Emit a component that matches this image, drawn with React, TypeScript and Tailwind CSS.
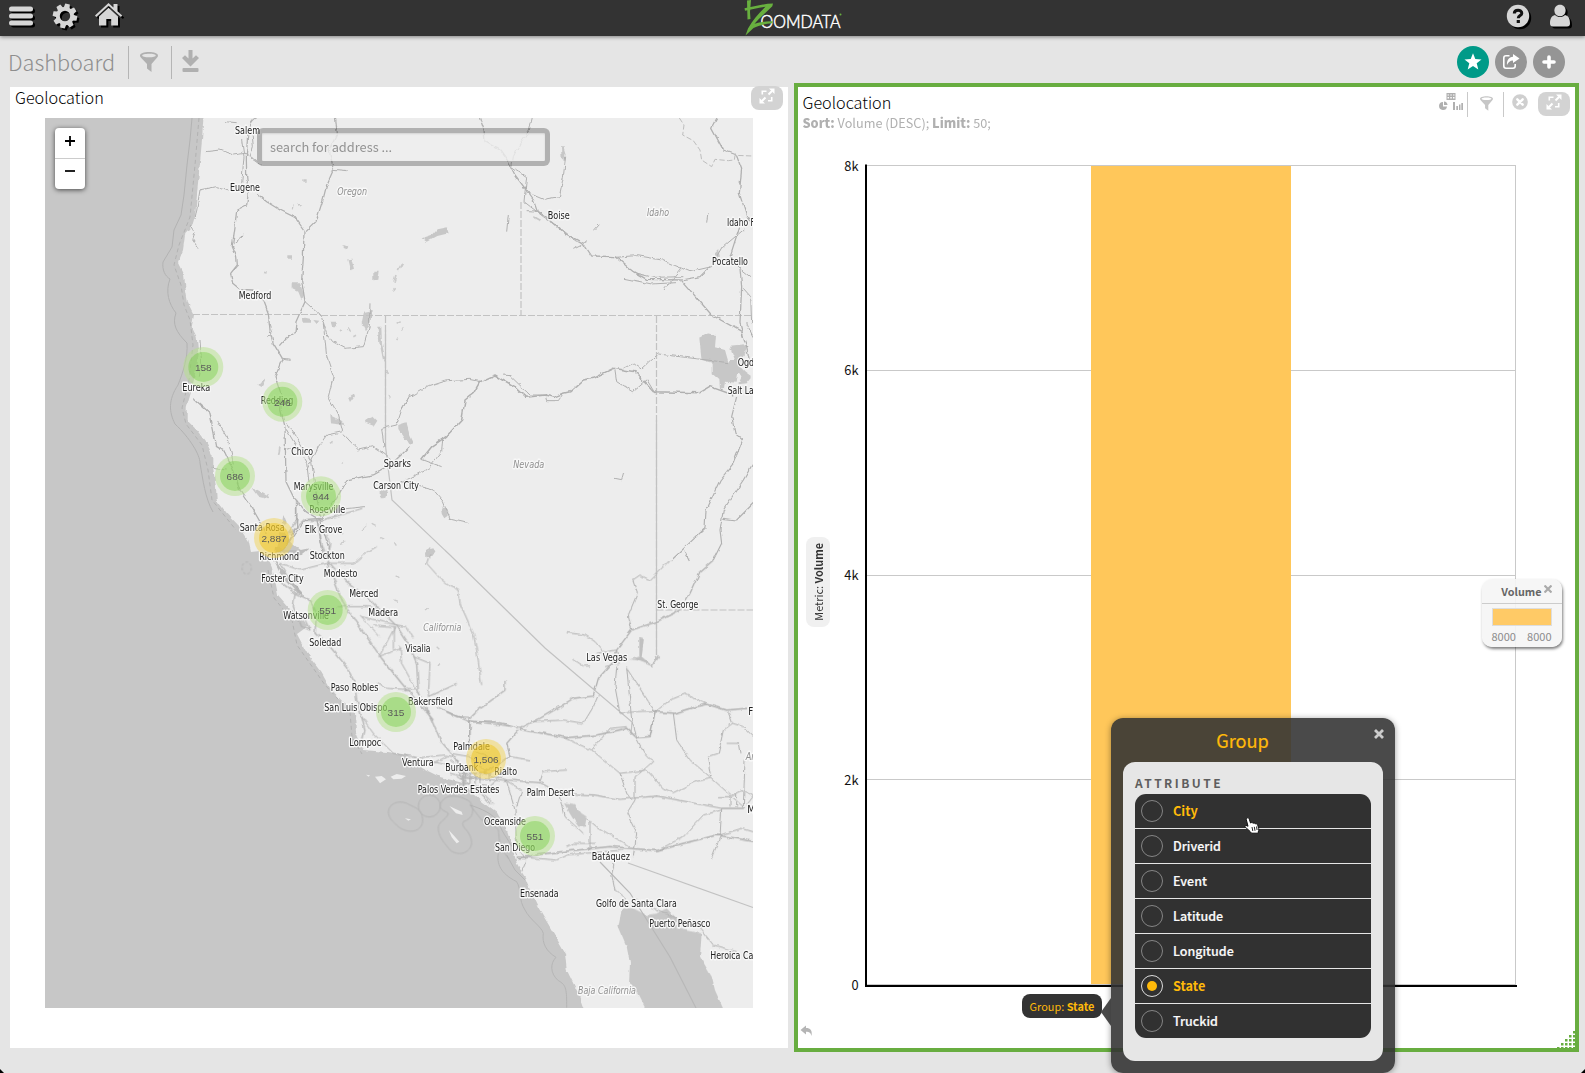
import React from "react";

const FONT = "font-['Noto_Sans_CJK_SC','Noto_Sans',sans-serif]";

type Label = [string, number, number, number, boolean?];

const LABELS: Label[] = [
  ["Salem", 235, 134, 25],
  ["Eugene", 230, 190.7, 30],
  ["Oregon", 337.3, 195, 29.7, true],
  ["Medford", 238.7, 298.5, 32.7],
  ["Eureka", 182.3, 391.2, 28],
  ["Redding", 260.7, 404.2, 32.7],
  ["Chico", 291.3, 455.2, 21.7],
  ["Sparks", 383.7, 467, 27.3],
  ["Carson City", 373.3, 488.5, 45.7],
  ["Marysville", 293.7, 489.5, 39.7],
  ["Roseville", 309.3, 512.5, 36],
  ["Santa Rosa", 239.7, 531, 45],
  ["Elk Grove", 304.7, 533, 37.7],
  ["Richmond", 259.3, 560, 39.7],
  ["Stockton", 309.7, 559, 35],
  ["Foster City", 261.3, 582, 42.3],
  ["Modesto", 323.7, 577.2, 33.7],
  ["Merced", 349.3, 596.5, 29],
  ["Watsonville", 283.3, 619, 45.7],
  ["Madera", 368.3, 616, 29.7],
  ["California", 423.3, 630.5, 38, true],
  ["Soledad", 309.3, 646.2, 32],
  ["Visalia", 405.3, 652, 25.3],
  ["Paso Robles", 330.7, 691.2, 47.7],
  ["San Luis Obispo", 324.3, 710.5, 63],
  ["Bakersfield", 408, 705.2, 45],
  ["Lompoc", 349.3, 746.2, 32],
  ["Ventura", 402, 766, 31.7],
  ["Palmdale", 453.3, 749.5, 36.7],
  ["Burbank", 445.3, 771.2, 33],
  ["Rialto", 494.3, 775.2, 22.7],
  ["Palos Verdes Estates", 417.7, 793.2, 81.7],
  ["Oceanside", 484, 825.2, 42],
  ["Palm Desert", 526.7, 796.2, 47.7],
  ["San Diego", 495, 851.2, 40],
  ["Batáquez", 591.7, 860, 38.3],
  ["Ensenada", 520, 897.2, 38.7],
  ["Golfo de Santa Clara", 596, 906.5, 80.7],
  ["Puerto Peñasco", 649.3, 927, 61],
  ["Heroica Ca", 710.3, 959, 43],
  ["Baja California", 578, 994.2, 58, true],
  ["Las Vegas", 586.3, 661, 41],
  ["St. George", 657.3, 608, 41],
  ["F", 748.3, 715, 5],
  ["M", 747.3, 813.2, 8],
  ["Ar", 745.7, 759.7, 9, true],
  ["Boise", 547.7, 218.5, 22],
  ["Idaho", 647, 216.2, 22, true],
  ["Idaho F", 727, 226, 28],
  ["Pocatello", 712, 265, 36],
  ["Nevada", 513.3, 467.7, 31, true],
  ["Ogd", 737.7, 366.2, 16.5],
  ["Salt La", 727.7, 393.5, 26],
];

const MARKERS: [string, number, number, boolean?][] = [
  ["158", 203.3, 367],
  ["246", 282.3, 401.7],
  ["686", 235, 476],
  ["944", 321, 496.3],
  ["2,887", 274, 538, true],
  ["551", 327.7, 610],
  ["315", 396, 712],
  ["1,506", 486, 759, true],
  ["551", 535, 836],
];

const OCEAN =
  "M35 108H204L202 140 199.3 170 197.3 190 195 217 192.7 225 185.3 233 183 250 178 263 184 275 185.3 287 188 303 194 315 191.7 327 196.7 337 198 350 196 370 191.7 390 186.7 407 186.7 420 196.7 430 206.7 443 213.3 457 213.3 470 216 487 216.7 500 226.7 513 240 527 248.3 540 251 552 260 551 267 557 271.7 567 275 580 278 595 286.7 605 295 615 303 621 308 626 297 634 301.7 643 311.7 660 321.7 673 330 688 343 702 355 713 356 733 363 750 386.7 752 406.7 755 420 767 440 777 463 783 473 793 483 802 496.7 812 506.7 830 513 850 516.7 863 521.7 872 525 877 530 890 538 907 550 927 565 953 566.7 970 578 993 587 1018H35Z";

const OFFSHORE =
  "M192 118 190 140 187 165 184 195 181 215 174 230 172 247 163 262C162 270 165 276 170 279 165 292 169 304 176 313 172 324 176 332 187 343 188 358 183 372 178 385 168 400 169 412 175 424 190 438 200 455 200 463 203 480 205 498 213 512 226 525 238 535C247 545 245 548 240 551 230 558 232 577 243 580 250 583 256 581 259 577 263 585 264 596 274 608L284 616C284 630 288 642 297 658L308 673 317 688 330 703 340 714C348 722 344 738 347 752L357 758C348 768 350 783 366 788 376 797 390 795 404 792L428 785 448 788 473 791";

/** A drawing group whose local units are a third of a map pixel. */
function Tile({ x, y, children }: { x: number; y: number; children: React.ReactNode }) {
  return <g transform={`translate(${x} ${y}) scale(.33333)`}>{children}</g>;
}

function GeoMap() {
  return (
    <svg viewBox="45 118 708 890" className="block h-[890px] w-[708px] overflow-hidden">
      <defs>
        <filter id="rough" x="35" y="108" width="728" height="910" filterUnits="userSpaceOnUse" colorInterpolationFilters="sRGB">
          <feTurbulence type="fractalNoise" baseFrequency="0.12" numOctaves="3" seed="4" />
          <feDisplacementMap in="SourceGraphic" scale="4" xChannelSelector="R" yChannelSelector="G" />
        </filter>
      </defs>
      <rect x="45" y="118" width="708" height="890" fill="#ededed" />

      <g filter="url(#rough)">
        <path d={OCEAN} fill="#c7c7c7" />
        <Tile x={450} y={560}>
          <path
            d="M515 1045 505 1100 530 1160 540 1210 537 1270 565 1300 600 1370H830L795 1290 785 1250 750 1190 755 1120 680 1105 680 1075 650 1045 620 1060 590 1065 550 1045Z"
            fill="#c7c7c7"
          />
          <path d="M342 730 375 735 395 760 410 770 405 800 385 800 365 770Z" fill="#c7c7c7" />
          <path d="M568 232 582 235 575 290 605 315 622 285 628 292 608 320 585 310 560 300 540 298 568 290Z" fill="#c0c0c0" />
        </Tile>
        <Tile x={400} y={110}>
          <path
            d="M898 685 925 670 948 675 945 712 975 720 985 755 1005 750 990 710 1040 705 1035 730 1015 765 1035 785 1056 800 1040 820 1015 823 1025 800 1015 785 1010 818 975 815 972 838 960 838 958 810 935 790 935 758 905 750Z"
            fill="#c7c7c7"
          />
          <path d="M65 385 95 375 110 358 140 352 146 370 112 378 80 395ZM483 112h8l6 20-4 18-8-8ZM0 945 20 940 28 975 38 995 28 1003 10 970 0 968ZM128 1190l12 2 4 20-10 8-10-14ZM75 1325l15-10 16 8-8 14-22 2ZM945 430l12-12 6 22-18 2ZM400 318l22 12-4 4-18-10Z" fill="#c7c7c7" />
        </Tile>
        <Tile x={40} y={110}>
          <path d="M755 520 780 520 792 555 785 570 775 545 755 535ZM972 605 995 600 992 640 975 660 965 640ZM1000 482h16l-4 30-12 2ZM925 448l12-2 8 30-12 5ZM908 405l14 5-4 8-10-4ZM742 436h14v10h-14ZM868 915 905 932 915 945 870 940ZM975 930l25-10 12 12-10 16-25-10ZM1075 945l25-8 10 60-15-10-20-30ZM1012 650h12l2 50 10 50-6 5-12-60ZM1022 1140h22l-10 25h-12ZM635 1130l45 25 5 10-30-8ZM790 208h10v10h-10ZM872 635h18v14h-14ZM788 622l22 4v12h-20ZM820 630l18 2-8 10ZM1045 850l4 14 4-2ZM925 865l15-15 5 6-15 20ZM655 825l18-20 2 6-10 20ZM755 295l10-10-4 14ZM775 282h12l-8 6Z" fill="#c9c9c9" />
          <path d="M1062 515l6-20M1075 480l12-22M1058 545l8-10M1070 640l12-8M1085 665l8-14M1070 690l6-8M900 660l6 4M925 655l6 8M940 680l8-4M672 487l8 2M1040 780l5 12M870 1000l8-6M720 1010l-4 25M905 1060l6-6M680 1150l6 14" stroke="#cbcbcb" strokeWidth="5" fill="none" />
          <path d="M730 1215 740 1240 725 1255 735 1275 755 1300 790 1325 760 1330 720 1345 700 1350 715 1300Z" fill="#c7c7c7" />
        </Tile>
        <Tile x={180} y={500}>
          <path d="M285 140 310 150 365 150 390 145 365 165 310 170 290 185 305 210 350 260 375 285 350 280 300 220 280 180Z" fill="#bdbdbd" />
          <path d="M740 150 760 145 766 155 748 166ZM787 25l12 2 4 20-10 8-8-14Z" fill="#c7c7c7" />
          <path d="M575 70l12 6M600 110l10 4M640 130l6 10M470 95l20 10M480 130l18-6M560 75l-14 14M650 230l8 6M735 330l8-6M640 300l12 4M770 440l8 8M780 490l-6 8" stroke="#cbcbcb" strokeWidth="4" fill="none" />
        </Tile>
      </g>

      {/* channel islands */}
      <Tile x={180} y={500}>
        <path
          d="M585 830 605 828 618 838 600 850ZM632 830 650 822 678 828 665 836 640 838ZM558 824l12 2-4 4ZM808 918 822 925 845 935 848 945 828 940ZM806 990 820 1005 838 1025 830 1030 815 1012ZM675 955l18 3-8 4Z"
          fill="#ededed"
        />
      </Tile>

      {/* coastal waters */}
      <g fill="none" stroke="#b2b2b2" strokeWidth="1">
        <path d={OFFSHORE} />
        <path d="M199 118 195 165 190 217 179 245 174 265 181 285 184 305 190 320 193 345 189 380 182 408 186 424 202 445 208 470 212 500 236 530" strokeDasharray="4 3" />
        <path d="M268 570 274 598 292 620 297 645 325 685 350 712 352 737 362 754" strokeDasharray="4 3" />
        <Tile x={180} y={500}>
          <g strokeWidth="2.6">
            <path d="M625 935C628 905 665 898 690 915 722 928 728 940 728 965 722 1000 680 1000 655 980 640 965 625 955 625 935Z" />
            <circle cx="748" cy="918" r="33" />
            <path d="M775 990C770 965 800 960 805 940 790 930 770 925 785 905 800 880 840 885 870 905 885 930 880 955 850 965 840 985 875 990 875 1030 870 1060 835 1070 810 1050 795 1030 778 1015 775 990Z" />
            <path d="M870 915 905 960 930 965 955 990 960 1040 985 1075" />
            <ellipse cx="200" cy="204" rx="14" ry="18" strokeDasharray="8 6" />
          </g>
        </Tile>
        <Tile x={450} y={560}>
          <g strokeWidth="2.6">
            <path d="M145 880C140 910 150 940 200 965 215 990 205 1020 225 1050 240 1080 275 1100 280 1120 275 1150 290 1175 318 1192 300 1210 300 1240 325 1262 350 1275 350 1290 350 1343" />
            <path d="M60 735C90 745 130 760 148 790 155 820 185 850 200 885M170 885 195 930 225 960" />
          </g>
        </Tile>
      </g>

      {/* state and country borders */}
      <g fill="none" stroke="#c2c2c2" strokeWidth="1.2" strokeDasharray="7 2">
        <path d="M193 314.5 321 314.5 M321 315.500H753M521 202V315M656.500 316V655M385.500 316V447M656.500 610H753" />
      </g>
      <g fill="none" stroke="#c2c2c2" strokeWidth="1.2">
        <path d="M656.500 420V655M385.500 330V446L392 500 450 555 545 648 632 722 631 735" />
        <path d="M628 863 753 907.5" />
        <path d="M600 862 630 893 670 957 696 1008" stroke="#b8b8b8" />
      </g>
      <Tile x={400} y={110}>
        <path d="M838 24 852 45 848 75 880 92 900 120 905 150 935 170 945 148 985 152 1003 150 1005 136 1059 138" fill="none" stroke="#bdbdbd" strokeWidth="3" strokeDasharray="16 7" />
      </Tile>

      {/* roads */}
      <g fill="none" stroke="#b0b0b0" strokeLinejoin="round" filter="url(#rough)">
        <Tile x={40} y={110}>
          <g strokeWidth="3.8">
            <path d="M650 24C632 30 625 60 622 90L619 140 620 200 625 250 620 285 590 300 585 350 577 410 590 440 592 465 572 490 578 520 600 538 640 540 670 570 685 610 690 660 700 700 727 745 705 800 725 860 722 900 735 950 738 1115 760 1160 798 1205 840 1230" />
            <path d="M650 250 680 275 720 300 765 322 792 360 790 440 785 510 795 575 768 635 765 670 740 685 718 710" />
            <path d="M885 10 892 70 868 120 880 180 860 225 850 265 828 335 798 365" />
            <path d="M795 575 845 620 860 670 878 695 915 715 970 710 988 650 990 580" strokeWidth="3" />
            <path d="M850 640 860 740 880 800 865 860 895 915 908 965 860 975 835 1010 800 1080" strokeWidth="3" />
            <path d="M908 970 955 1020 1000 1010 1040 1035 1065 1065" strokeWidth="3" />
            <path d="M1110 855 1085 900 1070 945 1025 955 1032 1010" strokeWidth="3" />
            <path d="M840 1230 890 1165 920 1110 1000 1095 1045 1070 1110 1010" />
            <path d="M840 1210 880 1200 975 1190M735 1020 752 1015M740 940 780 1000 815 1055 825 1130 840 1220M740 960 800 1060 810 1140" strokeWidth="3" />
            <path d="M460 865 510 910 520 960 530 1010 555 1025 580 1080 600 1140 640 1200 680 1270" />
            <path d="M515 1075 560 1080M530 930 565 990 580 1060" strokeWidth="3" />
            <path d="M480 690 485 760 478 800" strokeWidth="3" />
            <path d="M498 125 540 120 580 135 615 130 645 150 665 165" strokeWidth="3" />
            <path d="M465 330 480 240 530 230 570 240M450 345 465 370 458 390 475 415" strokeWidth="3" />
            <path d="M555 35 590 38M605 90 612 140 605 220M635 60 640 110 630 140M690 640 698 665 682 680M580 400 610 375M880 178 920 182M728 745 752 748" strokeWidth="3" />
            <path d="M770 1180 770 1250 740 1300M840 1225 800 1228 765 1270 730 1320 700 1340M840 1225 865 1310 860 1350M830 1225 850 1330" />
          </g>
        </Tile>
        <Tile x={400} y={110}>
          <g strokeWidth="3.8">
            <path d="M235 10 252 60 255 95 300 120 325 155 345 195 375 235 400 270 412 305 445 325 495 370 550 400 575 438 645 440 700 485 740 508 845 510 900 500 930 470" />
            <path d="M400 10 388 60 360 100 340 140 335 170 380 200 372 275 430 320 470 345 530 395" strokeWidth="3" />
            <path d="M645 442 710 437 785 450 870 485 935 470" strokeWidth="3" />
            <path d="M710 490 760 502 850 500M672 505 755 522 828 518M845 475 792 540M520 415 560 395" strokeWidth="3" />
            <path d="M497 140 490 200 478 260 430 268 375 245M380 302 410 303M325 315 320 365" strokeWidth="3" />
            <path d="M958 10 935 55 970 120 1010 135 1025 175 1018 250 1040 320 1050 330M1025 330 990 440 1020 475 1025 530 1020 640 1030 680" />
            <path d="M845 512 935 615 1025 665 1040 710 1050 760" />
            <path d="M935 470 970 410 1030 360M1030 535 1052 560 1055 640M1025 480 1050 500M1040 640 1059 680" strokeWidth="3" />
            <path d="M65 1048 95 1010 138 980 185 930 195 870 220 850 240 815 285 795 310 810 345 830 380 862 435 855 460 862 490 850 510 845 550 810 578 805 640 775 705 785 760 845 900 848 930 830 1000 855" strokeWidth="4.5" />
            <path d="M0 905 25 865 85 830 140 812 210 808 245 815M310 795 330 797 390 855 435 855 440 872 475 872 490 850M645 780 650 815 697 845 740 808 765 850M670 775 700 760 725 778 775 732 985 758" strokeWidth="3" />
            <path d="M0 1120 85 1075 125 1025 128 985M60 1130 100 1140 130 1175 150 1225 205 1238M65 1048 125 1070" strokeWidth="3" />
            <path d="M1010 860 995 920 1005 970 1028 990 1000 1060 960 1110 918 1200 915 1255 815 1350M1065 1050 1030 1110 970 1200 960 1260 965 1300 940 1350M970 1225 1010 1230 1070 1170M855 1325 868 1350" strokeWidth="3.5" />
            <path d="M582 362l16-18M645 1105l20 4 6-22M920 338l4-32" strokeWidth="3" />
          </g>
        </Tile>
        <Tile x={180} y={500}>
          <g strokeWidth="3.8">
            <path d="M415 70 425 130 445 185 500 245 560 290 600 330 650 378 690 440 710 490 715 580 755 660 780 720 830 780 860 830" />
            <path d="M440 185 470 260 490 310 560 410 605 475 665 550 760 660" />
            <path d="M350 0 350 60 325 100M330 100 375 60 420 62 550 25" strokeWidth="3.5" />
            <path d="M440 190 360 210 300 190M440 190 520 190 555 160 590 140M430 90 450 130 440 180" strokeWidth="3" />
            <path d="M300 245 345 280 390 300 410 340 405 400 450 440 500 500 525 550 530 600 545 650 555 690 545 730" />
            <path d="M345 280 340 320 365 380 390 390 375 360M300 190 320 230 350 265 370 290" strokeWidth="3.5" />
            <path d="M545 650 580 700 640 760 700 770 780 790 860 810" strokeWidth="3" />
            <path d="M700 775 790 765 820 770M760 790 800 770M545 350 650 375 680 380 700 415M640 380 640 450M540 345 600 410M580 375 645 380 600 465M590 550 620 565 710 570M595 470 665 445M660 440 665 490 720 590" strokeWidth="3" />
            <path d="M470 320 560 320 600 325M700 470 750 490 745 590" strokeWidth="3" />
            <path d="M750 160 740 190 780 235 810 260 835 270 840 310 880 400 890 450 905 555" strokeWidth="3" />
            <path d="M770 620 830 650 870 652 870 710 868 750M870 655 895 630 975 570 975 540M745 590 830 550M870 662 990 678" strokeWidth="3.500" />
            <path d="M830 780 850 850 930 860 960 830 990 815M845 820H910M840 835H905M855 810V855M870 810V855M885 810V860M850 870 900 880 935 915" strokeWidth="3.5" />
          </g>
        </Tile>
        <Tile x={450} y={560}>
          <g strokeWidth="3.8">
            <path d="M-10 455 60 485 135 487 210 505 270 475 330 440 370 415 430 408 445 355 490 305 500 270 545 210 620 185 690 150 720 100 750 35 790 0" />
            <path d="M350 218 405 225 435 245 460 275M545 210 535 165 562 100 548 60 570 45 600 60 660 0M440 280 500 270 505 310 465 320M370 298 400 318 420 318M445 405 430 440 400 490 340 480 250 485" strokeWidth="3" />
            <path d="M210 508 350 533 440 525 530 505 560 533 600 530 615 455 675 460 740 440 770 432 830 450 890 445" strokeWidth="4.5" />
            <path d="M620 452 660 420 705 402 770 432M670 460 680 540 720 600 785 655 885 745M785 655 735 665 670 698 640 685 590 630 510 640 425 570 345 535" strokeWidth="3" />
            <path d="M425 570 480 505 530 500M560 535 580 575 608 605 580 630 555 650 555 720 530 760 560 820 550 890M510 640 530 700 545 720M500 320 495 380 510 460 560 455 620 452M530 320 545 480 560 530M530 325 615 455" strokeWidth="3" />
            <path d="M835 455 848 490 820 510 805 580 775 590 785 650M848 490 880 500 920 540M885 600 880 740M815 745 880 745M830 550 865 550 870 580" strokeWidth="3" />
            <path d="M60 480 58 560M205 510 170 550 180 590 100 640 170 660 270 668 330 700 430 705 510 718 620 708 815 745 885 745" strokeWidth="3.5" />
            <path d="M270 665 280 635 348 630M0 600 60 650 170 665 195 750 200 860 230 900M180 590 240 600M165 660 215 690 200 740" strokeWidth="3" />
            <path d="M200 895 290 880 430 865 480 860 620 872 700 850 800 825 925 847" strokeWidth="4.500" />
            <path d="M625 870 700 830 760 765 815 750M800 828 875 805 925 820M815 745 810 830 785 895M410 775 440 800 540 860M330 700 345 770 400 820M420 780V870M350 860 370 850 435 850M200 890 320 900 350 885 520 870M230 900 215 935" strokeWidth="3" />
            <path d="M805 710H840V740M840 710 880 690 909 710M860 740V700M890 735 909 710" strokeWidth="3" />
            <path d="M495 900 485 940 495 990 530 1020M750 1105 790 1155 860 1175M555 1020 680 1075" strokeWidth="3" />
            <path d="M0 580 60 590 110 640M30 620 80 640M60 570 140 600M0 640 80 660M40 640V680M20 650 90 690 130 730M90 640V670M120 640V665" strokeWidth="3" />
          </g>
        </Tile>
      </g>

      {LABELS.map(([t, x, y, w, it]) => (
        <text
          key={t + x}
          x={x}
          y={y}
          textLength={w}
          lengthAdjust="spacingAndGlyphs"
          fontSize="9.6"
          fontFamily="'DejaVu Sans','Noto Sans',sans-serif"
          fontStyle={it ? "italic" : "normal"}
          fill={it ? "#909090" : "#222"}
          stroke="#f8f8f8"
          strokeWidth="2.800"
          strokeLinejoin="round"
          paintOrder="stroke"
        >
          {t}
        </text>
      ))}

      {MARKERS.map(([t, x, y, big]) => (
        <g key={t + x}>
          <circle cx={x} cy={y} r="20" fill={big ? "#f1d357" : "#b5e28c"} fillOpacity=".5" />
          <circle cx={x} cy={y} r="15" fill={big ? "#f0c20c" : "#6ecc39"} fillOpacity={big ? ".46" : ".4"} />
          <text
            x={x}
            y={y + 3.8}
            textAnchor="middle"
            fontSize="9.6"
            fontFamily="'Liberation Sans',sans-serif"
            fill="#5a5a5a"
            textLength={t.length > 3 ? 25 : 16.8}
            lengthAdjust="spacingAndGlyphs"
          >
            {t}
          </text>
        </g>
      ))}
    </svg>
  );
}

function Funnel({ className }: { className: string }) {
  return (
    <svg viewBox="0 0 18 20" className={className} fill="currentColor">
      <path fillRule="evenodd" d="M9 0c5 0 9 1.500 9 3.500 0 1-.6 1.800-1.500 2.700L11.500 12v8L7 16.500V12L1.500 6.200C.6 5.300 0 4.500 0 3.500 0 1.500 4 0 9 0Zm0 1.700c-4 0-6.800.8-6.800 1.800S5 5.300 9 5.300s6.800-.8 6.800-1.800S13 1.700 9 1.700Z" />
    </svg>
  );
}

/** Two arrows pulling apart over the broken outline of a frame. */
function ExpandPill({ className }: { className: string }) {
  return (
    <div className={"flex h-6 w-8 items-center justify-center rounded-lg bg-[#d3d3d3] text-white " + className}>
      <svg viewBox="0 0 16 16" className="-mt-[5px] h-4 w-4" fill="none" stroke="currentColor" strokeWidth="1.600">
        <path d="M7.500 3.300H3.300V6.500M12.700 9v3.700H9" />
        <path d="M9.500 6.500l3.500-3.500M6.500 9.500l-3.500 3.500" strokeWidth="2" />
        <path d="M10 .5h5.500v5.500zM.5 10v5.500h5.500z" fill="currentColor" stroke="none" />
      </svg>
    </div>
  );
}

function Header() {
  return (
    <header className="relative z-10 flex h-9 shrink-0 items-start justify-between bg-[#333] text-[#d6d6d6] shadow-[0_1px_4px_rgba(0,0,0,0.45)]">
      <div className="flex pt-1 pl-2">
        <svg viewBox="0 0 28 26" className="h-[26px] w-7 drop-shadow-[2px_2px_0_#000]" fill="currentColor">
          <rect x="1" y="2.500" width="24" height="5" rx="2.500" />
          <rect x="1" y="9.500" width="24" height="5" rx="2.500" />
          <rect x="1" y="16.500" width="24" height="5" rx="2.500" />
        </svg>
        <svg viewBox="-13 -13 26 26" className="ml-4 -mt-px h-[26px] w-[26px] drop-shadow-[2px_2px_0_#000]">
          <circle r="7.200" fill="none" stroke="currentColor" strokeWidth="4" />
          {[12, 57, 102, 147, 192, 237, 282, 327].map((a) => (
            <path key={a} d="M-3-8-2.300-12.200H2.300L3-8Z" fill="currentColor" transform={`rotate(${a})`} />
          ))}
        </svg>
        <svg viewBox="0 0 28 26" className="-mt-px ml-[17px] h-[26px] w-7 drop-shadow-[2px_2px_0_#000]" fill="currentColor">
          <path d="M1.300 14 0 12.500 13.500 0l5 4.500V1h4v7.200l4.700 4.300-1.300 1.500L13.500 2.800Z" />
          <path d="M13.500 4.800 23 13.500V22.500h-6.800V16h-4.900v6.500H4V13.500Z" />
        </svg>
      </div>
      <svg viewBox="740 0 110 36" className="absolute top-0 left-[740px] h-9 w-[110px]">
        <text
          x="760.500"
          y="27.500"
          fontFamily="Lato,sans-serif"
          fontWeight="300"
          fontSize="18"
          fill="#fff"
          stroke="#fff"
          strokeWidth=".5"
          textLength="80"
          lengthAdjust="spacingAndGlyphs"
        >
          OOMDATA
        </text>
        <path d="M744.500 8.200C754 6.500 764 3.500 773 3.500L772.300 6.200C765 13 759 19 754.500 23.800 760 22 767 21 773 21.300L772.500 23.300C766 23.800 759 25 753.500 28L745.500 35.500 748 28.500C753 20 759 13 765.500 6.800 759 7.500 752 9.500 745 10.800Z" fill="#68b03f" />
        <path d="M747 .5 751 0 750 12 750.500 19 747.500 19.500Z" fill="#68b03f" />
        <circle cx="840.500" cy="14.500" r="1" fill="#68b03f" />
      </svg>
      <div className="flex pt-1 pr-[14px]">
        <svg viewBox="0 0 24 24" className="-translate-x-px h-6 w-6 drop-shadow-[2px_2px_0_#000]">
          <circle cx="12" cy="12" r="11.200" fill="currentColor" />
          <path d="M8.300 9.500C8.300 5.200 15.800 5.200 15.800 9.200 15.800 11.700 12.300 11.500 12.300 14.300" fill="none" stroke="#111" strokeWidth="3" />
          <rect x="10.700" y="16" width="3.200" height="3" fill="#111" />
        </svg>
        <svg viewBox="0 0 22 24" className="ml-[18px] h-6 w-[22px] drop-shadow-[2px_2px_0_#000]" fill="currentColor">
          <path d="M11 .8c3.500 0 5.600 2.500 5.600 5.600 0 3-2.100 5.800-5.600 5.800s-5.600-2.800-5.600-5.800C5.400 3.300 7.500.8 11 .8Z" />
          <path d="M6 11c2.800 2.700 7.200 2.700 10 0 3.500 1 5 3.500 5 8.500 0 2-1 3-3 3H4c-2 0-3-1-3-3 0-5 1.500-7.500 5-8.500Z" />
        </svg>
      </div>
    </header>
  );
}

function Toolbar() {
  return (
    <div className="flex h-[47px] shrink-0 items-center pt-[5px] pr-5 pl-2 text-[#b0b0b0]">
      <h1 className="-mt-[1px] w-[106px] text-[21.700px] leading-8 font-light whitespace-nowrap text-[#8e8e8e]">Dashboard</h1>
      <div className="ml-[14px] h-[33px] w-px bg-[#b5b5b5]" />
      <Funnel className="ml-[11px] h-5 w-[18px]" />
      <div className="ml-[13px] h-[33px] w-px bg-[#b5b5b5]" />
      <svg viewBox="0 0 17 22" className="-mt-[2px] ml-[10px] h-[22px] w-[17px]" fill="currentColor">
        <path d="M6.500 0h4v8.500L14 5.300 17 8 8.500 16.500 0 8 3 5.300 6.500 8.500Z" />
        <rect x=".5" y="18" width="16" height="4" rx="1" />
      </svg>
      <div className="ml-auto flex gap-[6px] text-white">
        <div className="flex h-8 w-8 items-center justify-center rounded-full bg-[#009a88]">
          <svg viewBox="-10 -10 20 20" className="-mt-px h-5 w-5" fill="currentColor">
            <path d="M0-8.700 2.300-2.900 8.500-2.600 3.700 1.300 5.300 7.400 0 4-5.300 7.400-3.700 1.300-8.500-2.600-2.300-2.900Z" />
          </svg>
        </div>
        <div className="flex h-8 w-8 items-center justify-center rounded-full bg-[#959595]">
          <svg viewBox="0 0 18 16" className="h-4 w-[18px]" fill="none" stroke="currentColor" strokeWidth="1.600">
            <path d="M7.500 1.800H4C2.500 1.800 1.800 2.500 1.800 4v8c0 1.500.7 2.200 2.200 2.200h7c1.500 0 2.200-.7 2.200-2.200v-2" />
            <path d="M11 0l6.500 4.500L11 9V6.500C8 6.500 6.500 8 5 11 4.500 6.500 7 3 11 2.700Z" fill="currentColor" stroke="none" />
          </svg>
        </div>
        <div className="flex h-8 w-8 items-center justify-center rounded-full bg-[#959595]">
          <svg viewBox="0 0 14 14" className="h-[14px] w-[14px]" stroke="currentColor" strokeWidth="3.600" strokeLinecap="round">
            <path d="M7 2v10M2 7h10" />
          </svg>
        </div>
      </div>
    </div>
  );
}

function MapPanel() {
  return (
    <section className="mt-1 h-[961px] w-[778px] shrink-0 bg-white">
      <div className="flex h-[31px] items-start justify-between pr-[5px] pl-[5px]">
        <h2 className="-mt-[2px] text-[16.200px] leading-6 font-light text-black">Geolocation</h2>
        <ExpandPill className="-mt-px" />
      </div>
      <div className="relative ml-[35px] h-[890px] w-[708px]">
        <GeoMap />
        <div className="absolute top-[10px] left-[10px] flex h-[61px] w-[30px] flex-col rounded bg-white shadow-[0_1px_5px_rgba(0,0,0,0.65)]">
          <div className="flex h-[31px] items-center justify-center border-b border-[#ccc] pb-1">
            <svg viewBox="0 0 10 10" className="h-[10px] w-[10px]" stroke="#000" strokeWidth="1.800">
              <path d="M5 0v10M0 5h10" />
            </svg>
          </div>
          <div className="flex h-[30px] items-center justify-center pb-[6px]">
            <div className="h-[2px] w-[10px] bg-[#222]" />
          </div>
        </div>
        <div className="absolute top-[10px] left-[212px] flex h-[38px] w-[293px] items-center rounded-md border-[5px] border-black/25 bg-[#ededed]/80 bg-clip-padding pl-2 text-[12.800px] leading-5 text-[#939393] shadow-[inset_0_1px_2px_rgba(0,0,0,0.12)]">
          search for address ...
        </div>
      </div>
    </section>
  );
}

const TICKS = [
  { y: 165.5, label: "8k" },
  { y: 370, label: "6k" },
  { y: 575, label: "4k" },
  { y: 779.5, label: "2k" },
  { y: 984.5, label: "0" },
];

function ChartPanel() {
  return (
    <section className="relative ml-[6px] h-[969px] w-[785px] shrink-0 border-4 border-[#68ad40] bg-white">
      <div className="flex h-[53px] items-start justify-between pl-[4.500px]">
        <div className="pt-[3px]">
          <h2 className="text-[16.200px] leading-6 font-light text-black">Geolocation</h2>
          <p className="-translate-y-px text-[12.700px] leading-5 text-[#b0b0b0]">
            <b className="font-black">Sort:</b> Volume (DESC); <b className="font-black">Limit:</b> 50;
          </p>
        </div>
        <div className="flex pt-[5px] pr-[5px] text-[#c6c6c6]">
          <svg viewBox="0 0 24 18" className="mt-px h-[18px] w-6" fill="#b0b0b0">
            <path fillRule="evenodd" d="M7.500 0h9v7h-9ZM8.500 1.500v1h1.500v-1Zm2.800 0v1h1.500v-1Zm2.700 0v1h1.500v-1ZM8.500 4v1.500h1.500V4Zm2.800 0v1.500h1.500V4ZM14 4v1.500h1.500V4Z" />
            <path d="M4 9v4.500h4a4 4 0 1 1-4-4.500Z" />
            <path d="M5 8.500a4 4 0 0 1 3.600 3.600H5ZM14 9h2v8h-2ZM17.300 13h1.700v4h-1.700ZM20 11.500h1.500V17H20ZM22.300 10H24v7h-1.700Z" />
          </svg>
          <div className="ml-1 h-[25px] w-px bg-[#c9c9c9]" />
          <Funnel className="mt-1 ml-3 h-[15px] w-[13px]" />
          <div className="ml-[10px] h-[25px] w-px bg-[#c9c9c9]" />
          <svg viewBox="0 0 16 16" className="mt-[2px] ml-2 h-4 w-4">
            <circle cx="8" cy="8" r="7.800" fill="#cfcfcf" />
            <path d="M5.300 5.300l5.400 5.400M10.700 5.300l-5.400 5.400" stroke="#fff" strokeWidth="2.400" strokeLinecap="round" />
          </svg>
          <ExpandPill className="ml-[10px]" />
        </div>
      </div>

      <svg viewBox="798 140 777 908" className="block h-[908px] w-[777px]">
        {TICKS.map((t) => (
          <line key={t.y} x1="867" x2="1516" y1={Math.floor(t.y) + 0.5} y2={Math.floor(t.y) + 0.5} stroke="#c9c9c9" />
        ))}
        <line x1="1515.500" x2="1515.500" y1="165" y2="985" stroke="#c9c9c9" />
        <rect x="1091" y="166" width="200" height="818" fill="#ffc75a" />
        <path d="M865 164.500h2V987h-2Z" fill="#000" />
        <path d="M865 985H1517v2H865Z" fill="#000" />
        {TICKS.map((t) => (
          <text key={t.y} x="858.500" y={t.y + 5.4} textAnchor="end" fontSize="12.800" fill="#111" fontFamily="'Noto Sans CJK SC','Noto Sans',sans-serif">
            {t.label}
          </text>
        ))}
        <path d="M800.500 1030 806 1025.500v2.500c4.500 0 6.500 2.500 5.500 8-.8-3-2-4.300-5.500-4.300v2.800Z" fill="#b5b5b5" />
        {[0, 1, 2, 3, 4].map((r) =>
          Array.from({ length: r + 1 }, (_, c) => (
            <rect key={`${r}-${c}`} x={1573 - c * 4} y={1031 + r * 4} width="2.500" height="2.500" fill="#68ad40" />
          ))
        )}
      </svg>

      <div className="absolute top-[450px] left-2 flex h-[90px] w-6 items-center justify-center rounded-lg bg-[#f0f0f0]">
        <span className="rotate-180 text-[10.900px] leading-6 whitespace-nowrap text-[#333] [writing-mode:vertical-rl]">
          Metric: <b>Volume</b>
        </span>
      </div>

      <div className="absolute top-[492px] left-[683.500px] h-[68px] w-20 rounded-[10px] bg-[#f5f5f5]/90 shadow-[1px_2px_3px_rgba(0,0,0,0.5)]">
        <div className="flex h-[25px] items-center justify-end border-b border-[#ccc] pr-[10px] text-[10.800px] leading-6 font-bold text-[#666]">
          <span className="-mt-px">Volume</span>
          <svg viewBox="0 0 8 8" className="mb-1 ml-[2px] h-2 w-2" stroke="#aaa" strokeWidth="2.200">
            <path d="M.5.5l7 7M7.500.500l-7 7" />
          </svg>
        </div>
        <div className="mx-[10px] mt-1 h-[18px] border border-[#ddd] bg-[#ffca66]" />
        <div className="mx-[10px] flex justify-between text-[11px] leading-[20px] text-[#8c8c8c]">
          <span>8000</span>
          <span>8000</span>
        </div>
      </div>

      <div className="absolute top-[907px] left-[224px] flex h-6 w-20 items-center justify-center rounded-lg bg-[#333] text-[10.900px] leading-6 whitespace-nowrap text-[#ffba0a]">
        Group:&nbsp;<b>State</b>
      </div>
    </section>
  );
}

const ATTRIBUTES = ["City", "Driverid", "Event", "Latitude", "Longitude", "State", "Truckid"];

function GroupPopup() {
  return (
    <div className="absolute top-[718px] left-[1111px] z-20 h-[355px] w-[284px] rounded-xl bg-[#333]/[0.885] px-3 shadow-[0_1px_6px_rgba(0,0,0,0.4)]">
      <div className="absolute top-[280px] -left-[10px] h-7 w-[10px] bg-[#333]/[0.885] [clip-path:polygon(100%_0,0_50%,100%_100%)]" />
      <h3 className="h-11 pt-[6px] pr-[21px] text-center text-[18.200px] leading-8 text-[#ffba0a] [-webkit-text-stroke:0.200px_#ffba0a]">Group</h3>
      <svg viewBox="0 0 10 10" className="absolute top-[10.500px] right-[11.500px] h-[10px] w-[10px]" stroke="#ccc" strokeWidth="2.800">
        <path d="M1 1l8 8M9 1l-8 8" />
      </svg>
      <div className="h-[299px] rounded-xl bg-[#e6e6e6] px-3 pt-[10px]">
        <div className="h-[22px] text-[12px] leading-[21px] font-bold tracking-[2.450px] text-[#5e5e5e]">ATTRIBUTE</div>
        <ul className="flex flex-col gap-px overflow-hidden rounded-[11px]">
          {ATTRIBUTES.map((a) => (
            <li
              key={a}
              className={
                "flex h-[34px] items-center bg-[#313131] pl-[6px] leading-6 " +
                (a === "City" || a === "State"
                  ? "text-[12.700px] font-bold text-[#ffba0a]"
                  : "text-[12.500px] font-medium text-[#fafafa] [-webkit-text-stroke:0.200px_#fafafa]")
              }
            >
              <span
                className={
                  "mr-[10px] flex h-[22px] w-[22px] items-center justify-center rounded-full border " +
                  (a === "State" ? "border-[#ddd]" : "border-[#858585]")
                }
              >
                {a === "State" && <span className="h-[10px] w-[10px] rounded-full bg-[#ffba0a]" />}
              </span>
              {a}
            </li>
          ))}
        </ul>
      </div>
      <svg viewBox="0 0 16 17" className="absolute top-[99px] left-[133px] h-[17px] w-4">
        <path d="M3 1c1.200-.6 2 .2 2.300 1.200L6.500 6c1-.8 2-.5 2.500.3 1-.6 2-.3 2.400.6 1.200-.4 2 .2 2.300 1.200l1 3.500c.3 1.300 0 2.500-.5 3.400l.2 1.200H7.500C6 14 3.500 12 1.200 10.200.5 9.300 1.500 8 3 8.700L4 9.300 2.300 2.600C2.200 2 2.400 1.300 3 1Z" fill="#fff" stroke="#111" strokeWidth="1" />
        <path d="M8 10l.8 4M10.300 9.800l.7 4M12.500 9.500l.6 3.500" stroke="#111" strokeWidth=".9" />
      </svg>
    </div>
  );
}

export default function App() {
  return (
    <div className={"relative flex h-[1073px] w-[1585px] flex-col overflow-hidden bg-[#e5e5e5] " + FONT}>
      <Header />
      <Toolbar />
      <main className="flex items-start pl-[10px]">
        <MapPanel />
        <ChartPanel />
      </main>
      <GroupPopup />
      <div className="absolute right-0 bottom-0 h-1 w-1 bg-black [clip-path:polygon(100%_0,100%_100%,0_100%)]" />
      <div className="absolute bottom-0 left-0 h-1 w-1 bg-black [clip-path:polygon(0_0,100%_100%,0_100%)]" />
    </div>
  );
}
